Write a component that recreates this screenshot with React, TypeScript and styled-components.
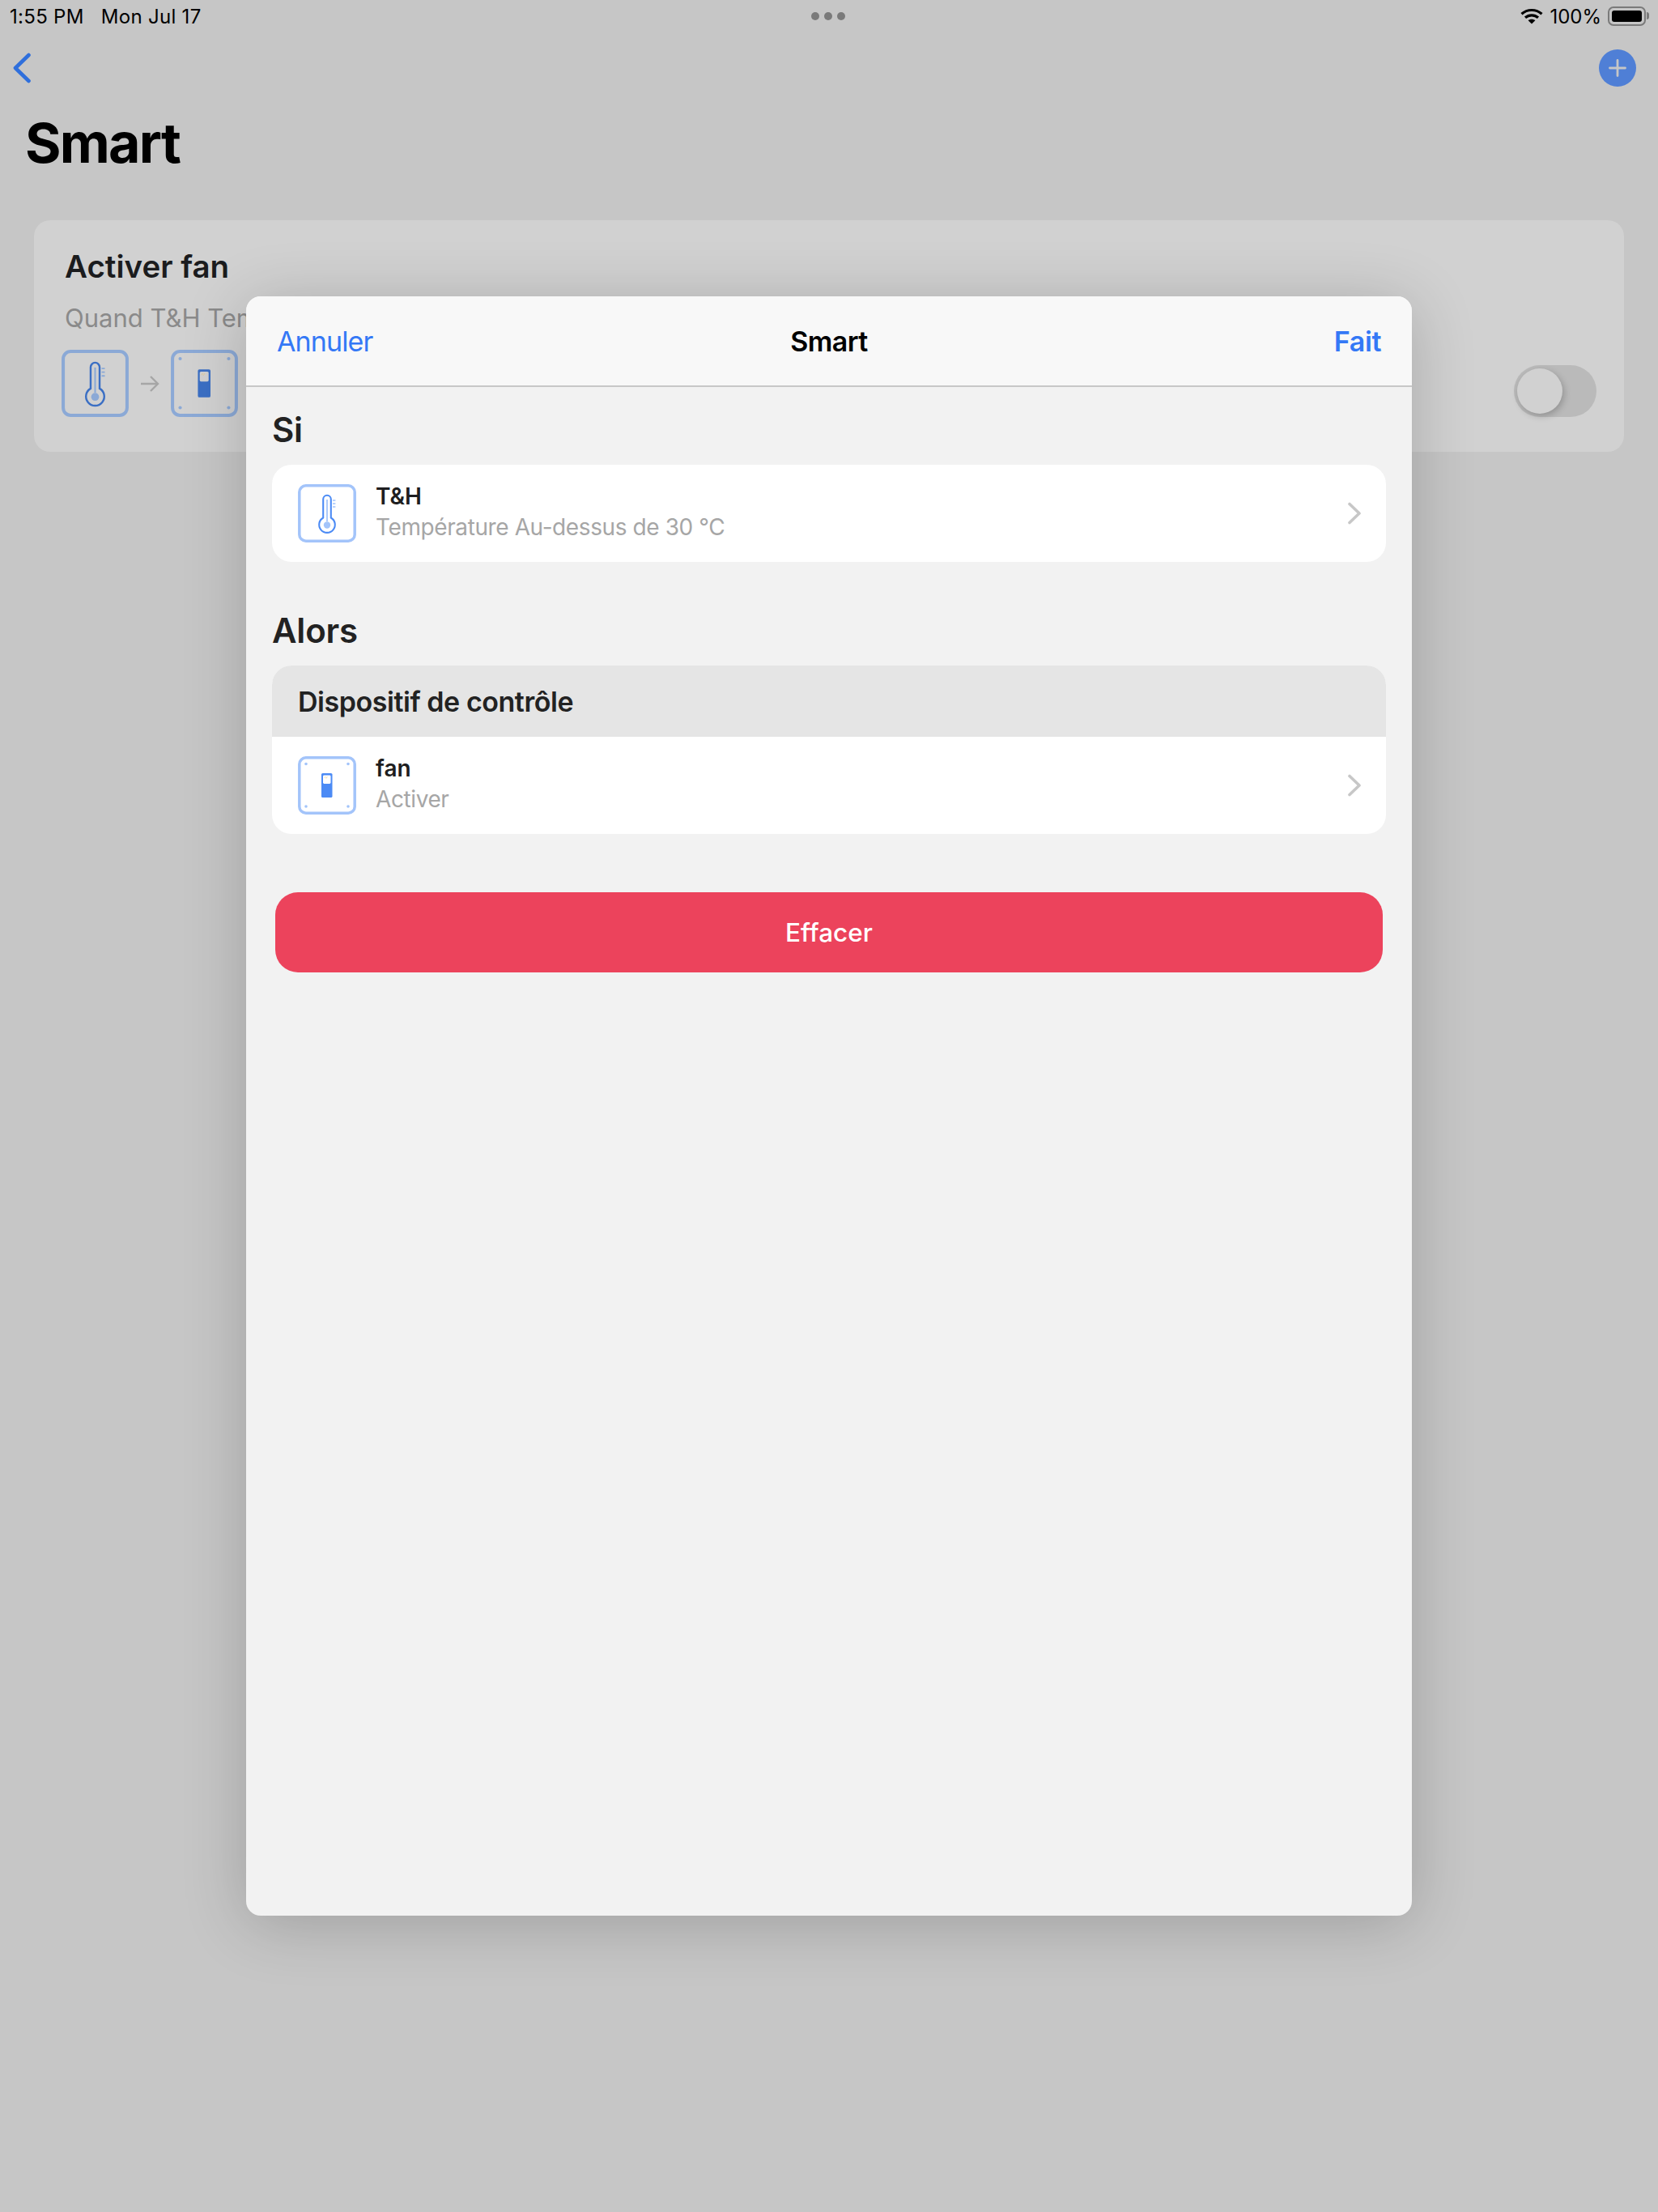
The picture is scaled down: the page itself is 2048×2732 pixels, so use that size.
import styled, { createGlobalStyle } from 'styled-components';

type Tone = 'dim' | 'bright';

const palette = {
  dim: { frame: '#8ba9d6', main: '#3b6fc4', soft: '#8ba9d6', inset: '#d1d1d1' },
  bright: { frame: '#a3c4fa', main: '#4c8bf5', soft: '#a3c4fa', inset: '#ffffff' },
};

const ThermometerIcon = ({ tone, size }: { tone: Tone; size: number }) => {
  const c = palette[tone];
  return (
    <svg width={size} height={size} viewBox="0 0 72 72" fill="none">
      <rect x="1.8" y="1.8" width="68.4" height="68.4" rx="8" stroke={c.frame} strokeWidth="3.5" />
      <path
        d="M31.2 41.5V18.6a4.8 4.8 0 0 1 9.6 0v22.9a9.8 9.8 0 1 1-9.6 0Z"
        stroke={c.main}
        strokeWidth="2.1"
      />
      <path d="M36 19v27" stroke={c.soft} strokeWidth="1.8" />
      <circle cx="36" cy="50.5" r="4.2" fill={c.soft} />
      <path d="M43 20h3.4M43 24h3.4M43 28h3.4" stroke={c.soft} strokeWidth="1.6" />
    </svg>
  );
};

const SwitchIcon = ({ tone, size }: { tone: Tone; size: number }) => {
  const c = palette[tone];
  return (
    <svg width={size} height={size} viewBox="0 0 72 72" fill="none">
      <rect x="1.8" y="1.8" width="68.4" height="68.4" rx="8" stroke={c.frame} strokeWidth="3.5" />
      <circle cx="10" cy="9.5" r="1.8" fill={c.soft} />
      <circle cx="62" cy="9.5" r="1.8" fill={c.soft} />
      <circle cx="10" cy="62" r="1.8" fill={c.soft} />
      <circle cx="62" cy="62" r="1.8" fill={c.soft} />
      <rect x="29" y="21" width="13.5" height="30" rx="1.6" fill={c.main} />
      <rect x="31" y="23.4" width="9.5" height="10.6" rx="1.4" fill={c.inset} />
      <path d="M33 27l1.4-2M34.8 27.6l1.6-2.4" stroke="#e8c87a" strokeWidth="0.6" />
    </svg>
  );
};

const Chevron = () => (
  <svg width="18" height="28" viewBox="0 0 18 28" fill="none">
    <path d="M3 2.5 15 14 3 25.5" stroke="#c7c7c7" strokeWidth="3.6" strokeLinecap="round" strokeLinejoin="round" />
  </svg>
);

const App = () => (
  <>
    <GlobalStyle />
    <Screen>
      <StatusBar>
        <StatusLeft>
          <span>1:55 PM</span>
          <span>Mon Jul 17</span>
        </StatusLeft>
        <Dots>
          <Dot />
          <Dot />
          <Dot />
        </Dots>
        <StatusRight>
          <svg width="28" height="20" viewBox="0 0 28 20" fill="none">
            <path d="M1.5 7.2C8.6.9 19.4.9 26.5 7.2" stroke="#000" strokeWidth="3.2" />
            <path d="M6 11.8c4.6-4 11.4-4 16 0" stroke="#000" strokeWidth="3.2" />
            <path d="M14 19.6 9.6 15.2c2.5-2 6.3-2 8.8 0L14 19.6Z" fill="#000" />
          </svg>
          <span>100%</span>
          <Battery>
            <BatteryFill />
          </Battery>
        </StatusRight>
      </StatusBar>

      <NavBar>
        <svg width="24" height="38" viewBox="0 0 24 38" fill="none">
          <path d="M20.5 3 4 19l16.5 16" stroke="#2f6fdc" strokeWidth="4.6" strokeLinecap="round" strokeLinejoin="round" />
        </svg>
        <AddButton>
          <svg width="22" height="22" viewBox="0 0 22 22" fill="none">
            <path d="M11 1.5v19M1.5 11h19" stroke="#c6c6c6" strokeWidth="2.8" strokeLinecap="round" />
          </svg>
        </AddButton>
      </NavBar>

      <PageTitle>Smart</PageTitle>

      <SceneCard>
        <SceneTitle>Activer fan</SceneTitle>
        <SceneText>Quand T&amp;H Température Au-dessus de 30 °C</SceneText>
        <SceneFooter>
          <SceneIcons>
            <ThermometerIcon tone="dim" size={83} />
            <svg width="24" height="24" viewBox="0 0 24 24" fill="none">
              <path d="M1 12h21M13 3l9 9-9 9" stroke="#a6a6a6" strokeWidth="2.4" />
            </svg>
            <SwitchIcon tone="dim" size={83} />
          </SceneIcons>
          <Toggle>
            <ToggleThumb />
          </Toggle>
        </SceneFooter>
      </SceneCard>

      <Overlay>
        <Modal>
          <ModalHeader>
            <CancelButton>Annuler</CancelButton>
            <ModalTitle>Smart</ModalTitle>
            <DoneButton>Fait</DoneButton>
          </ModalHeader>
          <ModalBody>
            <SectionTitle>Si</SectionTitle>
            <Group>
              <Row>
                <ThermometerIcon tone="bright" size={72} />
                <RowText>
                  <RowName>T&amp;H</RowName>
                  <RowDetail>Température Au-dessus de 30 °C</RowDetail>
                </RowText>
                <Chevron />
              </Row>
            </Group>

            <SectionTitle $spaced>Alors</SectionTitle>
            <Group>
              <GroupHeader>Dispositif de contrôle</GroupHeader>
              <Row>
                <SwitchIcon tone="bright" size={72} />
                <RowText>
                  <RowName>fan</RowName>
                  <RowDetail>Activer</RowDetail>
                </RowText>
                <Chevron />
              </Row>
            </Group>

            <DeleteButton>Effacer</DeleteButton>
          </ModalBody>
        </Modal>
      </Overlay>
    </Screen>
  </>
);

export default App;

const GlobalStyle = createGlobalStyle`
  * {
    box-sizing: border-box;
  }

  body {
    margin: 0;
    background: #c6c6c6;
    font-family: Inter, 'Liberation Sans', sans-serif;
  }
`;

const Screen = styled.div`
  position: relative;
  width: 2048px;
  height: 2732px;
  overflow: hidden;
  background: #c6c6c6;
`;

const StatusBar = styled.div`
  display: grid;
  grid-template-columns: 1fr auto 1fr;
  align-items: center;
  height: 40px;
  padding: 0 15px 0 12px;
  font-size: 24px;
  color: #000;
`;

const StatusLeft = styled.div`
  display: flex;
  gap: 21px;
  letter-spacing: 0.3px;
`;

const Dots = styled.div`
  display: flex;
  gap: 6px;
`;

const Dot = styled.div`
  width: 10px;
  height: 10px;
  border-radius: 50%;
  background: #7a7a7a;
`;

const StatusRight = styled.div`
  display: flex;
  justify-content: flex-end;
  align-items: center;
  gap: 8px;
`;

const Battery = styled.div`
  position: relative;
  width: 47px;
  height: 24px;
  padding: 3px;
  border: 2px solid #7a7a7a;
  border-radius: 7px;

  &::after {
    content: '';
    position: absolute;
    top: 5px;
    right: -6px;
    width: 3px;
    height: 9px;
    border-radius: 0 3px 3px 0;
    background: #7a7a7a;
  }
`;

const BatteryFill = styled.div`
  height: 100%;
  border-radius: 3px;
  background: #000;
`;

const NavBar = styled.div`
  display: flex;
  justify-content: space-between;
  align-items: center;
  height: 46px;
  margin-top: 21px;
  padding: 0 27px 0 15px;
`;

const AddButton = styled.div`
  display: flex;
  justify-content: center;
  align-items: center;
  width: 46px;
  height: 46px;
  border-radius: 50%;
  background: #4f7fd6;
`;

const PageTitle = styled.h1`
  margin: 29px 0 0;
  padding-left: 31px;
  font-size: 68px;
  line-height: 80px;
  font-weight: 700;
  letter-spacing: -1.8px;
  color: #000;
`;

const SceneCard = styled.div`
  display: flex;
  flex-direction: column;
  height: 286px;
  margin: 56px 42px 0;
  padding: 34px;
  border-radius: 20px;
  background: #d1d1d1;
`;

const SceneTitle = styled.div`
  padding-left: 4px;
  font-size: 38.5px;
  line-height: 46px;
  font-weight: 600;
  color: #1b1c1e;
`;

const SceneText = styled.div`
  margin-top: 22px;
  padding-left: 4px;
  font-size: 31px;
  line-height: 38px;
  color: #8a8a8a;
`;

const SceneFooter = styled.div`
  display: flex;
  justify-content: space-between;
  align-items: flex-end;
  margin-top: 20px;
`;

const SceneIcons = styled.div`
  display: flex;
  align-items: center;
  gap: 14px;
`;

const Toggle = styled.div`
  width: 102px;
  height: 64px;
  padding: 4px;
  border-radius: 32px;
  background: #bababa;
`;

const ToggleThumb = styled.div`
  width: 56px;
  height: 56px;
  border-radius: 50%;
  background: #d1d1d1;
  box-shadow: 2px 3px 8px rgba(0, 0, 0, 0.22);
`;

const Overlay = styled.div`
  position: absolute;
  inset: 0;
  display: flex;
  justify-content: center;
  align-items: center;
`;

const Modal = styled.div`
  display: flex;
  flex-direction: column;
  width: 1440px;
  height: 2000px;
  border-radius: 18px;
  overflow: hidden;
  background: #f2f2f2;
  box-shadow: 0 10px 80px rgba(0, 0, 0, 0.2);
`;

const ModalHeader = styled.div`
  display: grid;
  grid-template-columns: 1fr auto 1fr;
  align-items: center;
  height: 112px;
  padding: 0 38px;
  border-bottom: 2px solid #c8c8c8;
  background: #f8f8f8;
`;

const CancelButton = styled.div`
  font-size: 34px;
  letter-spacing: -0.9px;
  color: #3478f6;
`;

const ModalTitle = styled.div`
  font-size: 34px;
  font-weight: 600;
  letter-spacing: -0.6px;
  color: #000;
`;

const DoneButton = styled.div`
  font-size: 34px;
  font-weight: 600;
  letter-spacing: -0.4px;
  text-align: right;
  color: #3478f6;
`;

const ModalBody = styled.div`
  display: flex;
  flex-direction: column;
  padding: 28px 32px 0;
`;

const SectionTitle = styled.div<{ $spaced?: boolean }>`
  margin-top: ${(p) => (p.$spaced ? '60px' : '0')};
  margin-bottom: 18px;
  font-size: 42px;
  line-height: 50px;
  font-weight: 600;
  letter-spacing: -0.2px;
  color: #222;
`;

const Group = styled.div`
  border-radius: 24px;
  overflow: hidden;
  background: #fff;
`;

const GroupHeader = styled.div`
  display: flex;
  align-items: center;
  height: 88px;
  padding-left: 32px;
  font-size: 34px;
  font-weight: 600;
  letter-spacing: -0.45px;
  color: #222;
  background: #e5e5e5;
`;

const Row = styled.div`
  display: flex;
  align-items: center;
  height: 120px;
  padding: 0 30px 0 32px;
`;

const RowText = styled.div`
  display: flex;
  flex: 1;
  flex-direction: column;
  gap: 9px;
  margin-left: 24px;
  padding-bottom: 3px;
`;

const RowName = styled.div`
  font-size: 28px;
  line-height: 29px;
  font-weight: 600;
  color: #1e1e20;
`;

const RowDetail = styled.div`
  font-size: 28px;
  line-height: 29px;
  letter-spacing: -0.4px;
  color: #a6a6a6;
`;

const DeleteButton = styled.div`
  display: flex;
  justify-content: center;
  align-items: center;
  height: 99px;
  margin: 72px 4px 0;
  border-radius: 28px;
  font-size: 31.5px;
  font-weight: 500;
  color: #fff;
  background: #ec435c;
`;
